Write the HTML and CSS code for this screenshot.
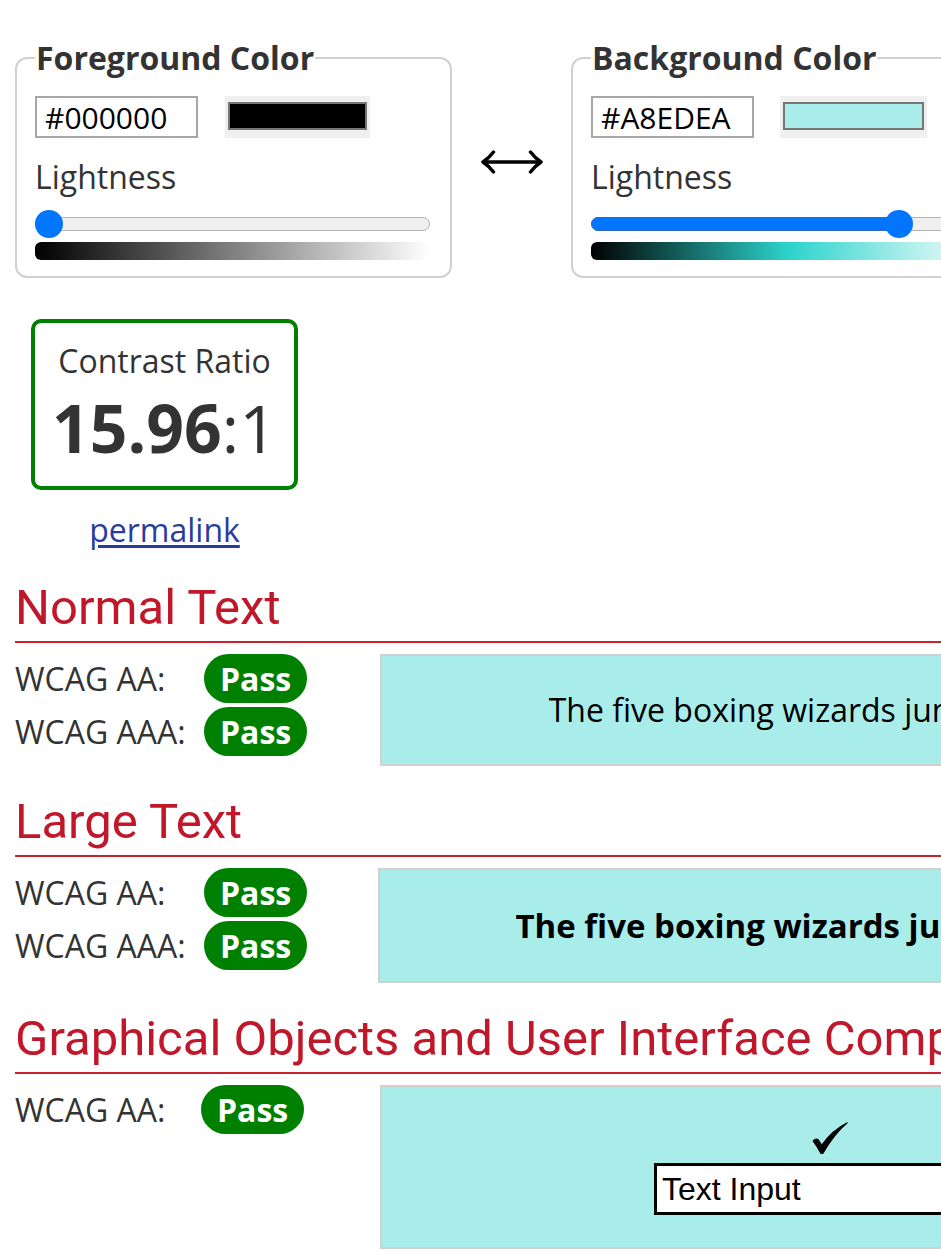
FILE: index.html
```html
<!DOCTYPE html>
<html lang="en">
<head>
<meta charset="utf-8">
<title>Color Contrast Checker</title>
<link rel="stylesheet" href="styles.css">
</head>
<body>
<main class="page">
  <div class="pickers">
    <fieldset class="picker">
      <legend>Foreground Color</legend>
      <div class="picker-row">
        <input class="hex" type="text" value="#000000" aria-label="Foreground hex">
        <span class="swatch"><span class="swatch-color swatch-fg"></span></span>
      </div>
      <div class="lightness-label">Lightness</div>
      <div class="slider" style="--value: 0">
        <div class="track"></div>
        <div class="thumb"></div>
      </div>
      <div class="gradient gradient-fg"></div>
    </fieldset>

    <div class="swap" aria-label="Swap colors">
      <svg class="swap-icon" width="62" height="24" viewBox="0 0 62 24" aria-hidden="true">
        <path d="M2.5 12 H59.5" fill="none" stroke="#000" stroke-width="3.4"/>
        <path d="M12.5 2 Q8 8 2 12 Q8 16 12.5 22" fill="none" stroke="#000" stroke-width="3.4" stroke-linecap="round" stroke-linejoin="round"/>
        <path d="M49.5 2 Q54 8 60 12 Q54 16 49.5 22" fill="none" stroke="#000" stroke-width="3.4" stroke-linecap="round" stroke-linejoin="round"/>
      </svg>
    </div>

    <fieldset class="picker">
      <legend>Background Color</legend>
      <div class="picker-row picker-row-bg">
        <input class="hex" type="text" value="#A8EDEA" aria-label="Background hex">
        <span class="swatch swatch-wide"><span class="swatch-color swatch-bg"></span></span>
      </div>
      <div class="lightness-label">Lightness</div>
      <div class="slider" style="--value: 0.8">
        <div class="track"><div class="fill"></div></div>
        <div class="thumb"></div>
      </div>
      <div class="gradient gradient-bg"></div>
    </fieldset>
  </div>

  <div class="ratio-area">
    <div class="ratio-box">
      <div class="ratio-label">Contrast Ratio</div>
      <div class="ratio-value"><strong>15.96</strong>:1</div>
    </div>
    <div class="permalink-row"><a class="permalink" href="#">permalink</a></div>
  </div>

  <section class="criteria">
    <h2 class="criteria-title">Normal Text</h2>
    <div class="criteria-body">
      <div class="checks">
        <span class="check-label">WCAG AA:</span><span class="badge">Pass</span>
        <span class="check-label">WCAG AAA:</span><span class="badge">Pass</span>
      </div>
      <div class="sample sample-normal">The five boxing wizards jump quickly.</div>
    </div>
  </section>

  <section class="criteria">
    <h2 class="criteria-title">Large Text</h2>
    <div class="criteria-body">
      <div class="checks checks-large">
        <span class="check-label">WCAG AA:</span><span class="badge">Pass</span>
        <span class="check-label">WCAG AAA:</span><span class="badge">Pass</span>
      </div>
      <div class="sample sample-large">The five boxing wizards jump quickly.</div>
    </div>
  </section>

  <section class="criteria">
    <h2 class="criteria-title">Graphical Objects and User Interface Components</h2>
    <div class="criteria-body">
      <div class="checks checks-graphic">
        <span class="check-label">WCAG AA:</span><span class="badge">Pass</span>
      </div>
      <div class="sample sample-graphic">
        <svg class="check-icon" width="36" height="32" viewBox="0 0 36 32" aria-hidden="true">
          <path d="M0.5 19 Q3 15 6.5 17.2 L9.8 22.3 Q19.5 8 35.5 0 L35.6 1.2 Q22.5 12 11.2 32 L8.6 32 Q5 25 0.5 19 Z" fill="#000"/>
        </svg>
        <input class="text-input" type="text" value="Text Input" aria-label="Text Input">
      </div>
    </div>
  </section>
</main>
</body>
</html>
```

FILE: styles.css
```css
html, body {
  margin: 0;
  padding: 0;
  overflow: hidden;
  background: #fff;
}

body {
  font-family: "Open Sans", "Noto Sans", sans-serif;
  font-size: 32px;
  line-height: 44px;
  color: #333;
}

.page {
  width: 1290px;
  box-sizing: border-box;
  padding: 36px 15px 0;
}

/* ---------- colour pickers ---------- */
.pickers {
  display: flex;
  align-items: flex-start;
}

.picker {
  width: 437px;
  min-width: 0;
  box-sizing: border-box;
  margin: 0;
  border: 2px solid #d0d0d0;
  border-radius: 12px;
  padding: 16px 20px 16px 18px;
}

.picker legend {
  font-weight: 700;
  font-size: 32px;
  line-height: 44px;
  padding: 0 1px;
  color: #333;
}

.picker-row {
  display: flex;
  gap: 27px;
}

.picker-row-bg {
  gap: 26px;
}

.hex {
  width: 163px;
  height: 42px;
  box-sizing: border-box;
  margin: 0;
  border: 2px solid #a6a6a6;
  border-radius: 0;
  padding: 0 8px;
  font-family: "Open Sans", sans-serif;
  font-size: 30px;
  color: #000;
  background: #fff;
  outline: none;
}

.swatch {
  display: block;
  width: 145px;
  height: 42px;
  box-sizing: border-box;
  padding: 6px 3px 8px;
  background: #efefef;
}

.swatch-wide {
  width: 147px;
}

.swatch-color {
  display: block;
  height: 100%;
  box-sizing: border-box;
  border: 2px solid #767676;
}

.swatch-fg { background: #000; }
.swatch-bg { background: #a8edea; }

.lightness-label {
  margin-top: 17px;
  line-height: 44px;
}

.slider {
  position: relative;
  height: 28px;
  box-sizing: border-box;
  padding-top: 7px;
  margin-top: 11px;
}

.track {
  height: 14px;
  box-sizing: border-box;
  border: 1px solid #b3b3b3;
  border-radius: 7px;
  background: #efefef;
}

.fill {
  height: 14px;
  margin: -1px;
  box-sizing: border-box;
  width: calc((100% - 26px) * var(--value) + 15px);
  border: 1px solid #2c68c4;
  border-radius: 7px;
  background: #0075ff;
}

.thumb {
  position: absolute;
  top: 0;
  left: calc((100% - 28px) * var(--value));
  width: 28px;
  height: 28px;
  border-radius: 50%;
  background: #0075ff;
}

.gradient {
  height: 18px;
  margin-top: 4px;
  border-radius: 6px;
}

.gradient-fg {
  background: linear-gradient(to right, #000, #fff);
}

.gradient-bg {
  background: linear-gradient(to right,
    hsl(177.4, 65.7%, 0%),
    hsl(177.4, 65.7%, 50%),
    hsl(177.4, 65.7%, 100%));
}

.swap {
  width: 119px;
  flex: none;
  display: flex;
  justify-content: center;
  padding-top: 114px;
}

.swap-icon {
  display: block;
}

/* ---------- contrast ratio ---------- */
.ratio-area {
  width: 267px;
  margin: 41px 0 0 16px;
  text-align: center;
}

.ratio-box {
  box-sizing: border-box;
  border: 4px solid #008000;
  border-radius: 10px;
  padding: 16px 0 21px;
  color: #333;
}

.ratio-label {
  line-height: 44px;
}

.ratio-value {
  margin-top: 6px;
  font-size: 66px;
  line-height: 76px;
}

.ratio-value strong {
  font-weight: 700;
}

.permalink-row {
  margin-top: 18px;
  line-height: 44px;
}

.permalink {
  color: #283c9f;
  text-decoration: underline;
  text-underline-offset: 3px;
}

/* ---------- criteria sections ---------- */
.criteria {
  margin-top: 28px;
}

.criteria-title {
  margin: 0 0 11px;
  padding-bottom: 5px;
  border-bottom: 2px solid #c8212f;
  font-family: Roboto, "Liberation Sans", sans-serif;
  font-weight: 400;
  font-size: 49px;
  line-height: 56px;
  color: #c1172a;
  white-space: nowrap;
}

.criteria-body {
  display: flex;
  align-items: flex-start;
}

.checks {
  flex: none;
  width: 365px;
  display: grid;
  grid-template-columns: 189px auto;
  row-gap: 4px;
  align-items: baseline;
  justify-items: start;
}

.checks-large {
  width: 363px;
}

.checks-graphic {
  grid-template-columns: 186px auto;
}

.check-label {
  color: #333;
  white-space: nowrap;
}

.badge {
  display: inline-block;
  padding: 2px 16px;
  line-height: 45px;
  border-radius: 25px;
  background: #008000;
  color: #fff;
  font-weight: 700;
}

.sample {
  flex: none;
  width: 890px;
  box-sizing: border-box;
  border: 2px solid #d0d0d0;
  background: #a8edea;
  padding: 32px;
  text-align: center;
  color: #000;
  white-space: nowrap;
}

.sample-large {
  font-weight: 700;
  font-size: 33px;
  line-height: 47px;
}

.sample-graphic {
  display: flex;
  flex-direction: column;
  align-items: center;
  padding: 35px 32px 32px;
}

.check-icon {
  display: block;
  margin: 0 0 9px 9px;
}

.text-input {
  display: block;
  width: 342px;
  height: 52px;
  box-sizing: border-box;
  margin: 0;
  border: 3px solid #000;
  border-radius: 0;
  padding: 0 5px;
  background: #fff;
  font-family: "Liberation Sans", Arial, sans-serif;
  font-size: 32px;
  color: #000;
  outline: none;
}
```
